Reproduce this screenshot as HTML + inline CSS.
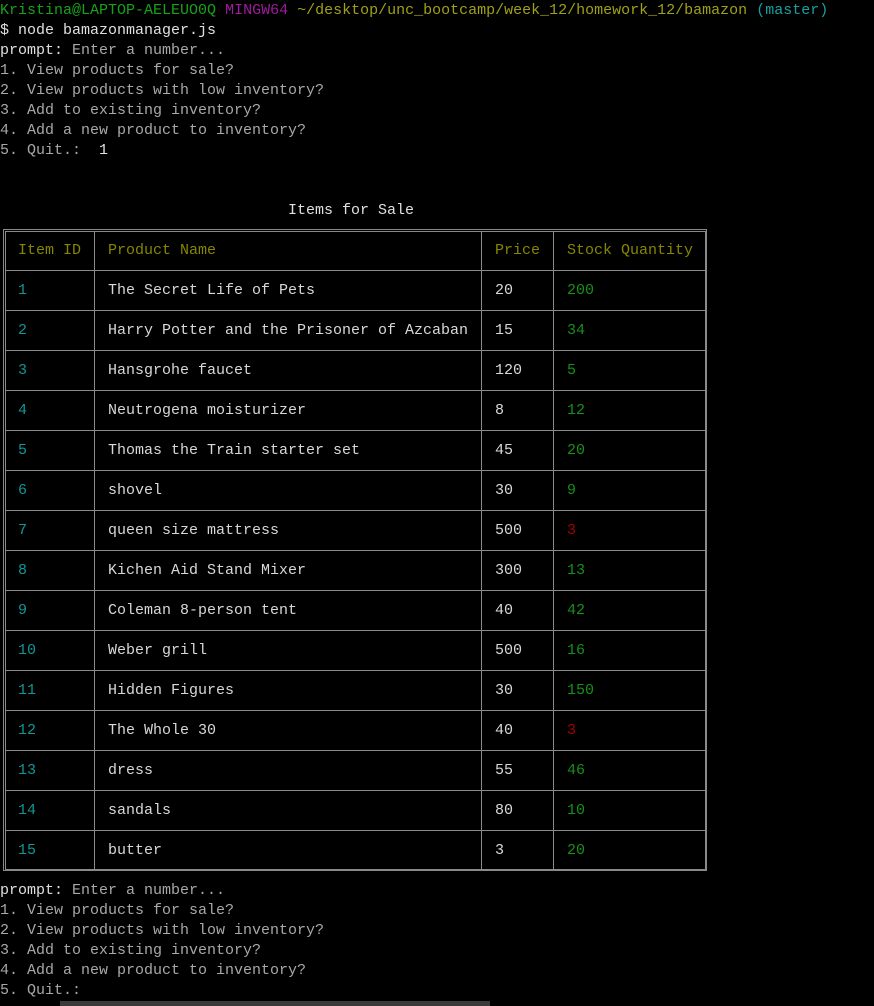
<!DOCTYPE html>
<html><head><meta charset="utf-8"><style>
html,body{margin:0;padding:0;background:#000;width:874px;height:1006px;overflow:hidden}
body{font-family:"Liberation Mono",monospace;font-size:15px;color:#c0c0c0;position:relative}
.l{position:absolute;left:0;height:20px;line-height:22px;white-space:pre}
.g{color:#a8a8a8}.w{color:#e0e0e0}
.t{position:absolute;height:20px;line-height:22px;white-space:pre;color:#d8d8d8}
.h{color:#868600}.id{color:#129696}.q{color:#18901a}.r{color:#a00000}
.v{position:absolute;background:#8a8a8a;width:1px}
.hz{position:absolute;background:#8a8a8a;height:1px;left:5px;width:701px}
</style></head><body>
<div class="l" style="top:0"><span style="color:#17a21a">Kristina@LAPTOP-AELEUO0Q</span> <span style="color:#a01aa0">MINGW64</span> <span style="color:#a0a018">~/desktop/unc_bootcamp/week_12/homework_12/bamazon</span> <span style="color:#18a0a0">(master)</span></div>
<div class="l w" style="top:20px">$ node bamazonmanager.js</div>
<div class="l" style="top:40px"><span class="w">prompt:</span><span class="g"> Enter a number...</span></div>
<div class="l g" style="top:60px">1. View products for sale?</div>
<div class="l g" style="top:80px">2. View products with low inventory?</div>
<div class="l g" style="top:100px">3. Add to existing inventory?</div>
<div class="l g" style="top:120px">4. Add a new product to inventory?</div>
<div class="l g" style="top:140px">5. Quit.:  <span class="w">1</span></div>
<div class="l w" style="top:200px;left:288px">Items for Sale</div>

<div style="position:absolute;left:3px;top:229px;width:704px;height:642px;border:1px solid #8a8a8a;box-sizing:border-box"></div>
<div style="position:absolute;left:5px;top:231px;width:701px;height:639px;border:1px solid #8a8a8a;box-sizing:border-box"></div>
<div class="v" style="left:94px;top:231px;height:639px"></div>
<div class="v" style="left:481px;top:231px;height:639px"></div>
<div class="v" style="left:553px;top:231px;height:639px"></div>
<div class="hz" style="top:270px"></div><div class="hz" style="top:310px"></div><div class="hz" style="top:350px"></div><div class="hz" style="top:390px"></div><div class="hz" style="top:430px"></div><div class="hz" style="top:470px"></div><div class="hz" style="top:510px"></div><div class="hz" style="top:550px"></div><div class="hz" style="top:590px"></div><div class="hz" style="top:630px"></div><div class="hz" style="top:670px"></div><div class="hz" style="top:710px"></div><div class="hz" style="top:750px"></div><div class="hz" style="top:790px"></div><div class="hz" style="top:830px"></div>

<div class="t h" style="top:240px;left:18px">Item ID</div><div class="t h" style="top:240px;left:108px">Product Name</div><div class="t h" style="top:240px;left:495px">Price</div><div class="t h" style="top:240px;left:567px">Stock Quantity</div>

<div class="t id" style="top:280px;left:18px">1</div><div class="t" style="top:280px;left:108px">The Secret Life of Pets</div><div class="t" style="top:280px;left:495px">20</div><div class="t q" style="top:280px;left:567px">200</div>
<div class="t id" style="top:320px;left:18px">2</div><div class="t" style="top:320px;left:108px">Harry Potter and the Prisoner of Azcaban</div><div class="t" style="top:320px;left:495px">15</div><div class="t q" style="top:320px;left:567px">34</div>
<div class="t id" style="top:360px;left:18px">3</div><div class="t" style="top:360px;left:108px">Hansgrohe faucet</div><div class="t" style="top:360px;left:495px">120</div><div class="t q" style="top:360px;left:567px">5</div>
<div class="t id" style="top:400px;left:18px">4</div><div class="t" style="top:400px;left:108px">Neutrogena moisturizer</div><div class="t" style="top:400px;left:495px">8</div><div class="t q" style="top:400px;left:567px">12</div>
<div class="t id" style="top:440px;left:18px">5</div><div class="t" style="top:440px;left:108px">Thomas the Train starter set</div><div class="t" style="top:440px;left:495px">45</div><div class="t q" style="top:440px;left:567px">20</div>
<div class="t id" style="top:480px;left:18px">6</div><div class="t" style="top:480px;left:108px">shovel</div><div class="t" style="top:480px;left:495px">30</div><div class="t q" style="top:480px;left:567px">9</div>
<div class="t id" style="top:520px;left:18px">7</div><div class="t" style="top:520px;left:108px">queen size mattress</div><div class="t" style="top:520px;left:495px">500</div><div class="t r" style="top:520px;left:567px">3</div>
<div class="t id" style="top:560px;left:18px">8</div><div class="t" style="top:560px;left:108px">Kichen Aid Stand Mixer</div><div class="t" style="top:560px;left:495px">300</div><div class="t q" style="top:560px;left:567px">13</div>
<div class="t id" style="top:600px;left:18px">9</div><div class="t" style="top:600px;left:108px">Coleman 8-person tent</div><div class="t" style="top:600px;left:495px">40</div><div class="t q" style="top:600px;left:567px">42</div>
<div class="t id" style="top:640px;left:18px">10</div><div class="t" style="top:640px;left:108px">Weber grill</div><div class="t" style="top:640px;left:495px">500</div><div class="t q" style="top:640px;left:567px">16</div>
<div class="t id" style="top:680px;left:18px">11</div><div class="t" style="top:680px;left:108px">Hidden Figures</div><div class="t" style="top:680px;left:495px">30</div><div class="t q" style="top:680px;left:567px">150</div>
<div class="t id" style="top:720px;left:18px">12</div><div class="t" style="top:720px;left:108px">The Whole 30</div><div class="t" style="top:720px;left:495px">40</div><div class="t r" style="top:720px;left:567px">3</div>
<div class="t id" style="top:760px;left:18px">13</div><div class="t" style="top:760px;left:108px">dress</div><div class="t" style="top:760px;left:495px">55</div><div class="t q" style="top:760px;left:567px">46</div>
<div class="t id" style="top:800px;left:18px">14</div><div class="t" style="top:800px;left:108px">sandals</div><div class="t" style="top:800px;left:495px">80</div><div class="t q" style="top:800px;left:567px">10</div>
<div class="t id" style="top:840px;left:18px">15</div><div class="t" style="top:840px;left:108px">butter</div><div class="t" style="top:840px;left:495px">3</div><div class="t q" style="top:840px;left:567px">20</div>

<div class="l" style="top:880px"><span class="w">prompt:</span><span class="g"> Enter a number...</span></div>
<div class="l g" style="top:900px">1. View products for sale?</div>
<div class="l g" style="top:920px">2. View products with low inventory?</div>
<div class="l g" style="top:940px">3. Add to existing inventory?</div>
<div class="l g" style="top:960px">4. Add a new product to inventory?</div>
<div class="l g" style="top:980px">5. Quit.:</div>
<div style="position:absolute;left:60px;top:1001px;width:430px;height:5px;background:#3a3a3a"></div>
</body></html>
